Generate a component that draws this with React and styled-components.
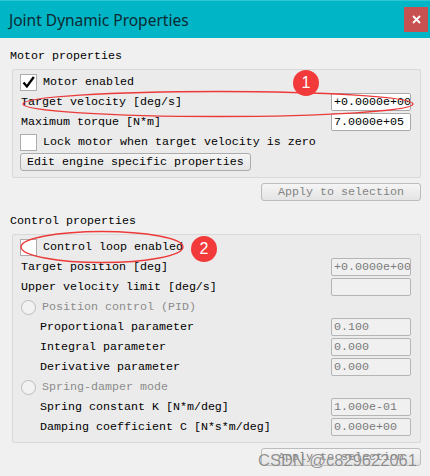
import React from 'react';
import styled, { createGlobalStyle } from 'styled-components';

const GlobalStyle = createGlobalStyle`
    html, body {
        margin: 0;
        padding: 0;
        background: #f0f0f0;
    }
`;

const Window = styled.div`
    background: #f0f0f0;
    height: 476px;
    overflow: hidden;
    position: relative;
    width: 430px;
    font-family: 'Liberation Mono', 'DejaVu Sans Mono', monospace;
    font-size: 11.67px;
    color: #000;
`;

const TitleBar = styled.div`
    align-items: center;
    background: #00b5c5;
    border-top: 1px solid #2cc6d4;
    box-sizing: border-box;
    display: flex;
    height: 38px;
    justify-content: space-between;
    padding: 0 2px 0 9px;
`;

const Title = styled.span`
    color: #0b2b33;
    font-family: 'Noto Sans', 'Open Sans', sans-serif;
    font-size: 15.5px;
`;

const CloseButton = styled.div`
    align-items: center;
    background: #c75050;
    display: flex;
    height: 25px;
    justify-content: center;
    width: 24px;
`;

const Content = styled.div`
    padding: 0 9px 0 10px;
`;

const Heading = styled.div`
    height: 16px;
    line-height: 16px;
    margin-bottom: 5px;
    padding-top: ${(p) => p.$top}px;
`;

const Group = styled.div`
    background: #ebebeb;
    border: 1px solid #d9d9d9;
    border-radius: 2px;
    margin-left: 2px;
    padding: 2px 9px 5px 7px;
`;

const Row = styled.div`
    align-items: center;
    display: flex;
    height: 20px;
    justify-content: space-between;
    padding-left: ${(p) => p.$indent || 0}px;
    color: ${(p) => (p.$muted ? '#8c8c8c' : '#000')};
`;

const Label = styled.span`
    padding-left: 1px;
    white-space: pre;
`;

const CheckLine = styled.div`
    align-items: center;
    display: flex;
    gap: 6px;
`;

const CheckBox = styled.div`
    background: #fff;
    border: 1px solid #adadad;
    box-sizing: border-box;
    height: 17px;
    width: 17px;
    line-height: 0;
`;

const Radio = styled.div`
    background: #f2f2f2;
    border: 1px solid #bdbdbd;
    border-radius: 50%;
    box-sizing: border-box;
    height: 15px;
    margin-left: 1px;
    width: 15px;
`;

const Field = styled.input`
    background: #fff;
    border: 1px solid #a8a8a8;
    border-radius: 2px;
    box-sizing: border-box;
    color: #000;
    font: inherit;
    height: 18px;
    margin: 0;
    outline: none;
    padding: 0 0 0 2px;
    width: 80px;

    &:disabled {
        background: #f0f0f0;
        border-color: #b5b5b5;
        color: #7a7a7a;
    }
`;

const Button = styled.div`
    background: linear-gradient(#f5f5f5, #e4e4e4);
    border: 1px solid ${(p) => (p.$disabled ? '#bcbcbc' : '#acacac')};
    border-radius: 3px;
    box-sizing: border-box;
    color: ${(p) => (p.$disabled ? '#838383' : '#000')};
    height: 18px;
    line-height: 16px;
    padding: 0 6px;
    text-align: ${(p) => (p.$disabled ? 'center' : 'left')};
    width: ${(p) => p.$width}px;
`;

const ButtonBar = styled.div`
    display: flex;
    justify-content: flex-end;
    margin-top: 5px;
`;

const Overlay = styled.svg`
    left: 0;
    pointer-events: none;
    position: absolute;
    top: 0;
`;

const Badge = styled.div`
    align-items: center;
    background: #f23a3a;
    border-radius: 50%;
    color: #fff;
    display: flex;
    font-family: 'Liberation Sans', Arial, sans-serif;
    font-size: 16px;
    height: 26px;
    justify-content: center;
    left: ${(p) => p.$x - 13}px;
    position: absolute;
    top: ${(p) => p.$y - 13}px;
    width: 26px;
`;

const Watermark = styled.div`
    color: rgba(110, 110, 110, 0.75);
    font-family: 'Liberation Sans', Arial, sans-serif;
    font-size: 16.5px;
    left: 258px;
    position: absolute;
    top: 451px;
    text-shadow: 0 0 1px rgba(255, 255, 255, 0.6);
`;

function Check() {
    return (
        <svg width="15" height="15" viewBox="0 0 15 15">
            <path
                d="M2.5 7.5l3.4 4L12.8 2"
                fill="none"
                stroke="#000"
                strokeWidth="2.3"
                strokeLinejoin="miter"
            />
        </svg>
    );
}

function FieldRow({ label, value, disabled, indent }) {
    return (
        <Row $indent={indent}>
            <Label>{label}</Label>
            <Field readOnly value={value} disabled={disabled} />
        </Row>
    );
}

export default function App() {
    return (
        <Window>
            <GlobalStyle />
            <TitleBar>
                <Title>Joint Dynamic Properties</Title>
                <CloseButton>
                    <svg width="9" height="9" viewBox="0 0 9 9">
                        <path
                            d="M1 1l7 7M8 1l-7 7"
                            stroke="#fff"
                            strokeWidth="1.8"
                        />
                    </svg>
                </CloseButton>
            </TitleBar>
            <Content>
                <Heading $top={10}>Motor properties</Heading>
                <Group>
                    <Row>
                        <CheckLine>
                            <CheckBox>
                                <Check />
                            </CheckBox>
                            <span>Motor enabled</span>
                        </CheckLine>
                    </Row>
                    <FieldRow label="Target velocity [deg/s]" value="+0.0000e+00" />
                    <FieldRow label="Maximum torque [N*m]" value="7.0000e+05" />
                    <Row>
                        <CheckLine>
                            <CheckBox />
                            <span>Lock motor when target velocity is zero</span>
                        </CheckLine>
                    </Row>
                    <Row>
                        <Button $width={231}>Edit engine specific properties</Button>
                    </Row>
                </Group>
                <ButtonBar>
                    <Button $disabled $width={160}>
                        Apply to selection
                    </Button>
                </ButtonBar>

                <Heading $top={12}>Control properties</Heading>
                <Group>
                    <Row>
                        <CheckLine>
                            <CheckBox />
                            <span>Control loop enabled</span>
                        </CheckLine>
                    </Row>
                    <FieldRow label="Target position [deg]" value="+0.0000e+00" disabled />
                    <FieldRow label="Upper velocity limit [deg/s]" value="" disabled />
                    <Row $muted>
                        <CheckLine>
                            <Radio />
                            <span>Position control (PID)</span>
                        </CheckLine>
                    </Row>
                    <FieldRow indent={19} label="Proportional parameter" value="0.100" disabled />
                    <FieldRow indent={19} label="Integral parameter" value="0.000" disabled />
                    <FieldRow indent={19} label="Derivative parameter" value="0.000" disabled />
                    <Row $muted>
                        <CheckLine>
                            <Radio />
                            <span>Spring-damper mode</span>
                        </CheckLine>
                    </Row>
                    <FieldRow indent={19} label="Spring constant K [N*m/deg]" value="1.000e-01" disabled />
                    <FieldRow
                        indent={19}
                        label="Damping coefficient C [N*s*m/deg]"
                        value="0.000e+00"
                        disabled
                    />
                </Group>
                <ButtonBar>
                    <Button $disabled $width={160}>
                        Apply to selection
                    </Button>
                </ButtonBar>
            </Content>

            <Overlay width="430" height="476" viewBox="0 0 430 476">
                <ellipse
                    cx="218"
                    cy="104"
                    rx="195"
                    ry="12.5"
                    fill="none"
                    stroke="#ec3a3a"
                    strokeWidth="1.4"
                />
                <ellipse
                    cx="102"
                    cy="247"
                    rx="81"
                    ry="15.5"
                    fill="none"
                    stroke="#ec3a3a"
                    strokeWidth="1.4"
                />
            </Overlay>
            <Badge $x={306} $y={83}>1</Badge>
            <Badge $x={204} $y={249}>2</Badge>
            <Watermark>CSDN @c829622061</Watermark>
        </Window>
    );
}
